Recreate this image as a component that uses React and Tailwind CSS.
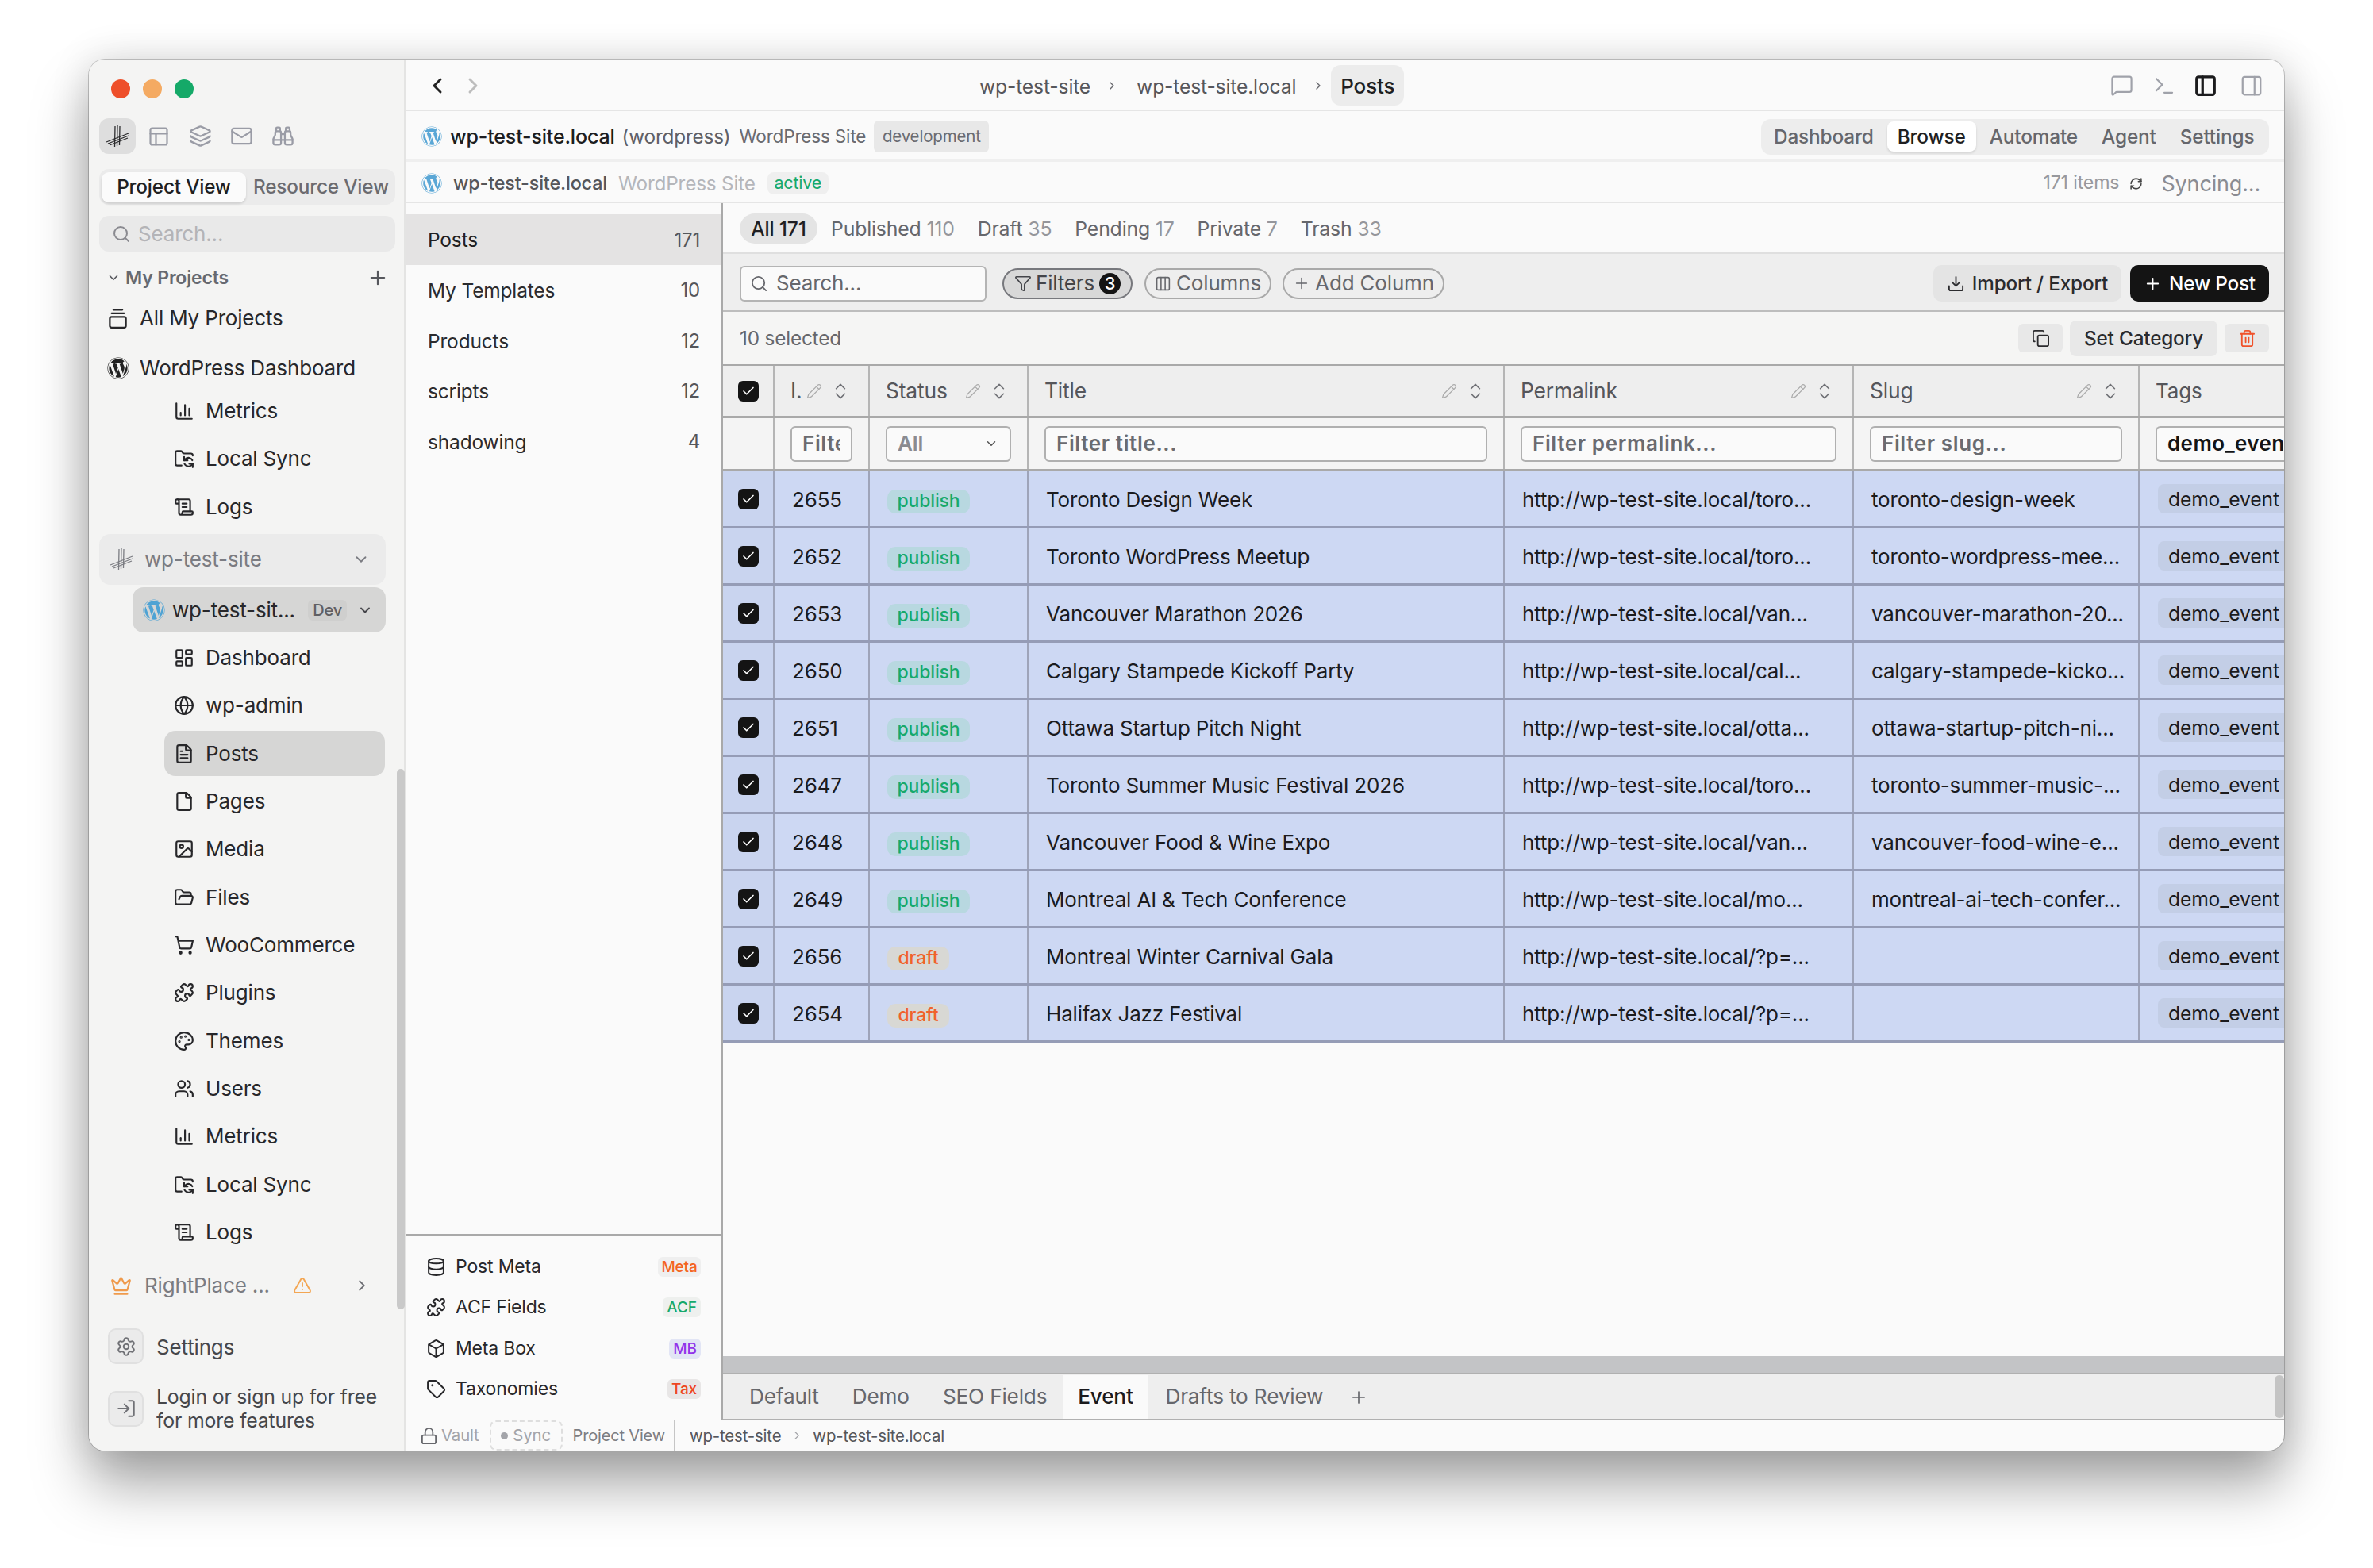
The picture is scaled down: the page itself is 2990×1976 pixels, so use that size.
import {
  Binoculars,
  Box,
  Check,
  ChartColumn,
  ChevronDown,
  ChevronLeft,
  ChevronRight,
  ChevronsUpDown,
  Columns3,
  Copy,
  Crown,
  Database,
  Download,
  File,
  FileText,
  FolderOpen,
  FolderSync,
  Funnel,
  GalleryVerticalEnd,
  Globe,
  Image,
  Layers,
  LayoutDashboard,
  Lock,
  LogIn,
  Mail,
  MessageSquare,
  Palette,
  PanelLeft,
  PanelRight,
  PanelsTopLeft,
  Pencil,
  Plus,
  Puzzle,
  RefreshCw,
  ScrollText,
  Search,
  Settings,
  ShoppingCart,
  Tag,
  Terminal,
  TriangleAlert,
  Trash2,
  Users,
} from "lucide-react";
import { FaWordpress } from "react-icons/fa";

const siteNav = [
  ["Dashboard", LayoutDashboard],
  ["wp-admin", Globe],
  ["Posts", FileText],
  ["Pages", File],
  ["Media", Image],
  ["Files", FolderOpen],
  ["WooCommerce", ShoppingCart],
  ["Plugins", Puzzle],
  ["Themes", Palette],
  ["Users", Users],
  ["Metrics", ChartColumn],
  ["Local Sync", FolderSync],
  ["Logs", ScrollText],
];

const rows = [
  ["2655", "publish", "Toronto Design Week", "http://wp-test-site.local/toro...", "toronto-design-week"],
  ["2652", "publish", "Toronto WordPress Meetup", "http://wp-test-site.local/toro...", "toronto-wordpress-mee..."],
  ["2653", "publish", "Vancouver Marathon 2026", "http://wp-test-site.local/van...", "vancouver-marathon-20..."],
  ["2650", "publish", "Calgary Stampede Kickoff Party", "http://wp-test-site.local/cal...", "calgary-stampede-kicko..."],
  ["2651", "publish", "Ottawa Startup Pitch Night", "http://wp-test-site.local/otta...", "ottawa-startup-pitch-ni..."],
  ["2647", "publish", "Toronto Summer Music Festival 2026", "http://wp-test-site.local/toro...", "toronto-summer-music-..."],
  ["2648", "publish", "Vancouver Food & Wine Expo", "http://wp-test-site.local/van...", "vancouver-food-wine-e..."],
  ["2649", "publish", "Montreal AI & Tech Conference", "http://wp-test-site.local/mo...", "montreal-ai-tech-confer..."],
  ["2656", "draft", "Montreal Winter Carnival Gala", "http://wp-test-site.local/?p=...", ""],
  ["2654", "draft", "Halifax Jazz Festival", "http://wp-test-site.local/?p=...", ""],
];

function HashLogo({ className }) {
  return (
    <svg viewBox="0 0 32 32" className={className} fill="none" stroke="currentColor" strokeWidth="1.3">
      <path d="M13 3 12.5 29M16 2 15.5 28M19 3 18.5 27" />
      <path d="M2 23 30 12M4 25 30 15M6 27 29 18" />
    </svg>
  );
}

function Checkbox() {
  return (
    <span className="flex h-[26px] w-[26px] items-center justify-center rounded-[6px] bg-[#141414]">
      <Check size={18} strokeWidth={2.2} className="text-white" />
    </span>
  );
}

function SubRow({ label, Icon, active }) {
  return (
    <div className="flex h-[60.33px] items-center pl-[95px] pr-[24px]">
      <div
        className={
          active
            ? "flex h-[57px] w-full items-center rounded-[14px] bg-[#d6d6d5] pl-[12px] text-[#27272a]"
            : "flex h-[57px] w-full items-center pl-[12px] text-[#27272a]"
        }
      >
        <Icon size={26} strokeWidth={2} className="shrink-0" />
        <span className="ml-[14px] text-[26px] leading-none">{label}</span>
      </div>
    </div>
  );
}

function Sidebar() {
  return (
    <aside className="relative flex w-[399px] shrink-0 flex-col border-r-2 border-[#e4e4e3] bg-[#f4f4f3]">
      {/* traffic lights */}
      <div className="flex gap-[16px] pl-[28px] pt-[25px]">
        <span className="h-[24px] w-[24px] rounded-full bg-[#ee4f2a]" />
        <span className="h-[24px] w-[24px] rounded-full bg-[#f4aa62]" />
        <span className="h-[24px] w-[24px] rounded-full bg-[#15a968]" />
      </div>

      {/* app switcher */}
      <div className="mt-[25px] flex gap-[6px] px-[13px] text-[#9a9ca6]">
        <span className="flex h-[45px] w-[46px] items-center justify-center rounded-[12px] bg-[#dedede] text-[#2c2c2e]">
          <HashLogo className="h-[32px] w-[32px]" />
        </span>
        <span className="flex h-[45px] w-[46px] items-center justify-center"><PanelsTopLeft size={28} strokeWidth={1.9} /></span>
        <span className="flex h-[45px] w-[46px] items-center justify-center"><Layers size={29} strokeWidth={1.9} /></span>
        <span className="flex h-[45px] w-[46px] items-center justify-center"><Mail size={29} strokeWidth={1.9} /></span>
        <span className="flex h-[45px] w-[46px] items-center justify-center"><Binoculars size={29} strokeWidth={1.9} /></span>
      </div>

      <div className="mx-[13px] mt-[19px] flex h-[45px] w-[373px] items-center rounded-[12px] bg-[#ebebeb] p-[3px]">
        <span className="flex h-[38px] w-[182px] items-center justify-center rounded-[9px] bg-[#fbfbfb] text-[24.3px] font-medium leading-none text-[#1f1f22] shadow-[0_2px_3px_rgba(0,0,0,0.12)]">
          Project View
        </span>
        <span className="ml-[9px] whitespace-nowrap text-[24.3px] font-medium leading-none text-[#6b6b70]">Resource View</span>
      </div>

      <div className="mx-[13px] mt-[14px] flex h-[45px] w-[373px] items-center rounded-[12px] bg-[#e9e9e9] pl-[16px]">
        <Search size={24} strokeWidth={2} className="text-[#8a8a90]" />
        <span className="ml-[9px] text-[26px] leading-none text-[#b4b4b7]">Search...</span>
      </div>

      <div className="mt-[15px] flex h-[36px] items-center pl-[22px] pr-[19px] text-[#666970]">
        <ChevronDown size={18} strokeWidth={2.2} className="text-[#55575c]" />
        <span className="ml-[6px] text-[23px] font-semibold leading-none">My Projects</span>
        <Plus size={28} strokeWidth={1.9} className="ml-auto text-[#55575c]" />
      </div>

      <div className="mt-[6px] flex h-[54px] items-center pl-[23px] text-[#27272a]">
        <GalleryVerticalEnd size={27} strokeWidth={2} />
        <span className="ml-[14px] text-[26px] leading-none">All My Projects</span>
      </div>

      <div className="mt-[10px] flex h-[52px] items-center pl-[23px] text-[#27272a]">
        <FaWordpress size={28} className="text-[#222]" />
        <span className="ml-[13px] text-[26px] leading-none">WordPress Dashboard</span>
      </div>

      <div className="-mt-[2px]">
        <SubRow label="Metrics" Icon={ChartColumn} />
        <SubRow label="Local Sync" Icon={FolderSync} />
        <SubRow label="Logs" Icon={ScrollText} />
      </div>

      <div className="mx-[13px] mt-[4px] flex h-[64px] w-[361px] items-center rounded-[14px] bg-[#ebebeb] pl-[12px] pr-[20px] pt-[1px] text-[#7b7c82]">
        <HashLogo className="h-[32px] w-[32px]" />
        <span className="ml-[13px] text-[26px] leading-none">wp-test-site</span>
        <ChevronDown size={22} strokeWidth={2} className="ml-auto" />
      </div>

      <div className="ml-[55px] mt-[3px] flex h-[57px] w-[319px] items-center rounded-[14px] bg-[#d6d6d5] pl-[13px] pr-[16px] pt-[1px] text-[#27272a]">
        <FaWordpress size={28} className="text-[#4fa3d4]" />
        <span className="ml-[9px] text-[26px] leading-none">wp-test-sit...</span>
        <span className="ml-auto rounded-[6px] bg-[#cfcfce] px-[6px] py-[3px] text-[20px] font-medium leading-none text-[#5f5f63]">Dev</span>
        <ChevronDown size={20} strokeWidth={2.2} className="ml-[13px] text-[#45454a]" />
      </div>

      <div className="mt-[2px]">
        {siteNav.map(([label, Icon]) => (
          <SubRow key={label} label={label} Icon={Icon} active={label === "Posts"} />
        ))}
      </div>

      <div className="mt-[12px] flex h-[50px] items-center pl-[27px] text-[#7b7c82]">
        <Crown size={27} strokeWidth={2} className="text-[#ef9a4c]" />
        <span className="ml-[16px] text-[26px] leading-none">RightPlace ...</span>
        <TriangleAlert size={24} strokeWidth={1.9} className="ml-[29px] text-[#f3a653]" />
        <ChevronRight size={22} strokeWidth={2} className="ml-[52px] text-[#6e6f74]" />
      </div>

      <div className="mt-[29px] flex items-center pl-[24px] text-[#46474b]">
        <span className="flex h-[45px] w-[45px] items-center justify-center rounded-[10px] border-2 border-[#e0e0e0] bg-[#ebebeb]">
          <Settings size={26} strokeWidth={1.8} className="text-[#707176]" />
        </span>
        <span className="ml-[16px] pt-[2px] text-[26px] leading-none">Settings</span>
      </div>

      <div className="mt-[26px] flex items-center pl-[24px] text-[#46474b]">
        <span className="flex h-[45px] w-[45px] items-center justify-center rounded-[10px] border-2 border-[#e0e0e0] bg-[#ebebeb]">
          <LogIn size={26} strokeWidth={1.8} className="text-[#707176]" />
        </span>
        <span className="ml-[16px] text-[24.8px] leading-[30px]">
          Login or sign up for free
          <br />
          for more features
        </span>
      </div>

      {/* scrollbar */}
      <span className="absolute left-[388px] top-[894px] h-[681px] w-[10px] rounded-full bg-[#c9c9c9]" />
    </aside>
  );
}

function TopBars() {
  return (
    <>
      <div className="flex h-[65px] shrink-0 items-center border-b-2 border-[#e5e5e5] pl-[24px] pr-[26px] pt-[2px]">
        <ChevronLeft size={32} strokeWidth={2.2} className="text-[#222]" />
        <ChevronRight size={32} strokeWidth={2.2} className="ml-[13px] text-[#bdbdbd]" />
        <span className="ml-[622px] pt-[3px] text-[24.7px] leading-none text-[#56575c]">wp-test-site</span>
        <ChevronRight size={16} strokeWidth={2} className="ml-[19px] text-[#66676c]" />
        <span className="ml-[23px] pt-[3px] text-[24.7px] leading-none text-[#56575c]">wp-test-site.local</span>
        <ChevronRight size={16} strokeWidth={2} className="ml-[20px] text-[#66676c]" />
        <span className="ml-[8px] flex h-[51px] w-[92px] items-center justify-center rounded-[12px] bg-[#ececec] pt-[3px] text-[26px] font-medium leading-none text-[#1f1f22]">
          Posts
        </span>
        <MessageSquare size={29} strokeWidth={1.8} className="ml-auto text-[#a0a2aa]" />
        <Terminal size={30} strokeWidth={1.8} className="ml-[24px] text-[#a0a2aa]" />
        <PanelLeft size={30} strokeWidth={2.6} className="ml-[22px] text-[#1b1b1d]" />
        <PanelRight size={30} strokeWidth={1.8} className="ml-[28px] text-[#a0a2aa]" />
      </div>

      <div className="flex h-[64px] shrink-0 items-center border-b-[3px] border-[#efefef] pl-[20px] pr-[19px] pt-[3px]">
        <FaWordpress size={26} className="text-[#5aa7d6]" />
        <span className="ml-[10px] text-[25px] font-medium leading-none text-[#1d1d20]">wp-test-site.local</span>
        <span className="ml-[9px] text-[24.3px] leading-none text-[#5f6066]">(wordpress)</span>
        <span className="ml-[11px] text-[22.5px] leading-none text-[#6a6b70]">WordPress Site</span>
        <span className="ml-[10px] flex h-[40px] w-[145px] items-center justify-center rounded-[6px] bg-[#e8e8e8] text-[20.5px] leading-none text-[#6a6b70]">
          development
        </span>
        <div className="ml-auto flex h-[45px] w-[640px] items-center rounded-[12px] bg-[#ededed] pl-[16px] text-[24.4px] font-medium leading-none text-[#66676c]">
          <span>Dashboard</span>
          <span className="ml-[17px] flex h-[38px] w-[112px] items-center justify-center rounded-[8px] bg-white text-[#1f1f22] shadow-[0_2px_3px_rgba(0,0,0,0.12)]">
            Browse
          </span>
          <span className="ml-[17px]">Automate</span>
          <span className="ml-[30px]">Agent</span>
          <span className="ml-[30px]">Settings</span>
        </div>
      </div>

      <div className="flex h-[52px] shrink-0 items-center border-b-2 border-[#e5e5e5] pl-[20px] pr-[30px] pt-[4px]">
        <FaWordpress size={26} className="text-[#5aa7d6]" />
        <span className="ml-[14px] text-[23.4px] font-medium leading-none text-[#55565b]">wp-test-site.local</span>
        <span className="ml-[14px] text-[24.3px] leading-none text-[#b5b6ba]">WordPress Site</span>
        <span className="ml-[15px] flex h-[28px] w-[77px] items-center justify-center rounded-[8px] bg-[#efefef] text-[21.5px] leading-none text-[#16a96c]">
          active
        </span>
        <span className="ml-auto text-[23.2px] leading-none text-[#97989d]">171 items</span>
        <RefreshCw size={17} strokeWidth={2.2} className="ml-[13px] text-[#444]" />
        <span className="ml-[23px] text-[27px] leading-none text-[#8b8c92]">Syncing...</span>
      </div>
    </>
  );
}

function ListPanel() {
  const lists = [
    ["Posts", 171],
    ["My Templates", 10],
    ["Products", 12],
    ["scripts", 12],
    ["shadowing", 4],
  ];
  const extras = [
    ["Post Meta", Database, "Meta", "w-[54px] bg-[#efefef] text-[#f4641f]"],
    ["ACF Fields", Puzzle, "ACF", "w-[48px] bg-[#eef0ee] text-[#16a96c]"],
    ["Meta Box", Box, "MB", "w-[40px] bg-[#e2e5f5] text-[#9333ea]"],
    ["Taxonomies", Tag, "Tax", "w-[42px] bg-[#e8e6e6] text-[#ee4622]"],
  ];
  return (
    <div className="flex w-[400px] shrink-0 flex-col border-r-2 border-[#a9a9a9]">
      <div className="flex-1 pt-[14px]">
        {lists.map(([name, count], i) => (
          <div
            key={name}
            className={
              i === 0
                ? "flex h-[64px] items-center justify-between bg-[#e4e3e3] pl-[28px] pr-[27px] pt-[1px] text-[#1f1f22]"
                : "flex h-[63.6px] items-center justify-between pl-[28px] pr-[27px] pt-[1px] text-[#2b2b2e]"
            }
          >
            <span className="text-[24.5px] leading-none">{name}</span>
            <span className="text-[24px] leading-none text-[#55565b]">{count}</span>
          </div>
        ))}
      </div>
      <div className="h-[235px] border-t-2 border-[#a9a9a9] pt-[14px]">
        {extras.map(([name, Icon, badge, tone]) => (
          <div key={name} className="flex h-[51.3px] items-center pl-[26px] pr-[26px] text-[#27272a]">
            <Icon size={25} strokeWidth={1.9} />
            <span className="ml-[12px] text-[23px] leading-none">{name}</span>
            <span className={`ml-auto flex h-[25px] items-center justify-center rounded-[6px] text-[19px] font-medium leading-none ${tone}`}>
              {badge}
            </span>
          </div>
        ))}
      </div>
    </div>
  );
}

function Toolbar() {
  const tabs = [
    ["Published", "110"],
    ["Draft", "35"],
    ["Pending", "17"],
    ["Private", "7"],
    ["Trash", "33"],
  ];
  return (
    <>
      <div className="flex h-[64px] shrink-0 items-center border-b-[3px] border-[#dfdfdf] pl-[21px] pt-[3px] text-[24.8px] leading-none">
        <span className="flex h-[38px] w-[98px] items-center justify-center rounded-full bg-[#e4e4e4] text-[24.5px] font-medium text-[#1f1f22]">All 171</span>
        <div className="ml-[17px] flex gap-[29px]">
          {tabs.map(([name, n]) => (
            <span key={name} className="text-[#66676c]">
              {name} <span className="text-[#95969b]">{n}</span>
            </span>
          ))}
        </div>
      </div>

      <div className="flex h-[73px] shrink-0 items-center border-b-2 border-[#bdbdbd] bg-[#eeeeee] pl-[21px] pr-[19px] pt-[3px]">
        <div className="flex h-[45px] w-[311px] items-center rounded-[6px] border-2 border-[#b4b4b4] bg-[#fafafa] pl-[11px]">
          <Search size={23} strokeWidth={1.9} className="text-[#66676c]" />
          <span className="ml-[10px] text-[26px] leading-none text-[#66676c]">Search...</span>
        </div>
        <button className="ml-[20px] flex h-[39px] w-[164px] items-center justify-center rounded-full border-2 border-[#77787d] bg-[#d8d8d8] text-[26px] leading-none text-[#44454a]">
          <Funnel size={22} strokeWidth={1.8} />
          <span className="ml-[5px]">Filters</span>
          <span className="ml-[6px] flex h-[27px] w-[27px] items-center justify-center rounded-full bg-[#141414] text-[22px] font-medium text-white">3</span>
        </button>
        <button className="ml-[15px] flex h-[39px] w-[160px] items-center justify-center rounded-full border-2 border-[#a9a9a9] text-[26px] leading-none text-[#66676c]">
          <Columns3 size={21} strokeWidth={1.8} />
          <span className="ml-[6px]">Columns</span>
        </button>
        <button className="ml-[14px] flex h-[39px] w-[204px] items-center justify-center rounded-full border-2 border-[#a9a9a9] text-[26px] leading-none text-[#66676c]">
          <Plus size={22} strokeWidth={1.6} />
          <span className="ml-[6px]">Add Column</span>
        </button>
        <button className="ml-auto flex h-[46px] w-[237px] items-center justify-center rounded-[10px] bg-[#e4e4e4] text-[24.3px] font-medium leading-none text-[#2b2b2e]">
          <Download size={23} strokeWidth={1.9} />
          <span className="ml-[9px]">Import / Export</span>
        </button>
        <button className="ml-[11px] flex h-[46px] w-[175px] items-center justify-center rounded-[10px] bg-[#141414] text-[24.3px] font-medium leading-none text-white">
          <Plus size={23} strokeWidth={1.9} />
          <span className="ml-[9px]">New Post</span>
        </button>
      </div>

      <div className="flex h-[66px] shrink-0 items-center bg-[#f5f5f4] pl-[21px] pr-[19px]">
        <span className="text-[24.3px] leading-none text-[#66676c]">10 selected</span>
        <span className="ml-auto flex h-[36px] w-[56px] items-center justify-center rounded-[6px] bg-[#e8e8e8] text-[#2b2b2e]">
          <Copy size={23} strokeWidth={1.9} />
        </span>
        <span className="ml-[9px] flex h-[45px] w-[186px] items-center justify-center rounded-[8px] bg-[#e8e8e8] text-[24.3px] font-medium leading-none text-[#2b2b2e]">
          Set Category
        </span>
        <span className="ml-[9px] flex h-[36px] w-[56px] items-center justify-center rounded-[6px] bg-[#e8e8e8] text-[#f0522a]">
          <Trash2 size={23} strokeWidth={1.9} />
        </span>
      </div>
    </>
  );
}

function HeadCell({ width, label }) {
  return (
    <div className={`flex h-full shrink-0 items-center border-r-2 border-[#b5b5b5] pl-[20px] ${width}`}>
      <span className="text-[26.4px] leading-none text-[#55565b]">{label}</span>
      <Pencil size={20} strokeWidth={1.5} className="ml-auto text-[#ababab]" />
      <ChevronsUpDown size={26} strokeWidth={1.5} className="ml-[10px] mr-[22px] text-[#707176]" />
    </div>
  );
}

function FilterInput({ width, value }) {
  return (
    <div className={`flex h-full shrink-0 items-center border-r-2 border-[#b5b5b5] px-[20px] ${width}`}>
      <div className="flex h-[45px] w-full items-center rounded-[6px] border-2 border-[#b0b0b0] bg-[#fafafa] px-[13px] text-[26px] font-semibold leading-none tracking-[0.63px] text-[#6a6b70]">
        <span className="block overflow-hidden whitespace-nowrap leading-[32px]">{value}</span>
      </div>
    </div>
  );
}

function DataTable() {
  return (
    <div className="flex flex-col overflow-hidden border-b-[3px] border-[#959cb6]">
      <div className="flex h-[65px] shrink-0 items-center border-t-2 border-[#a9a9a9] bg-[#eeeeee]">
        <div className="flex h-full w-[65px] shrink-0 items-center justify-center border-r-2 border-[#b5b5b5]">
          <Checkbox />
        </div>
        <HeadCell width="w-[120px]" label="I." />
        <HeadCell width="w-[200px]" label="Status" />
        <HeadCell width="w-[600px]" label="Title" />
        <HeadCell width="w-[440px]" label="Permalink" />
        <HeadCell width="w-[360px]" label="Slug" />
        <div className="flex h-full flex-1 items-center pl-[20px]">
          <span className="text-[26px] leading-none text-[#55565b]">Tags</span>
        </div>
      </div>

      <div className="flex h-[67px] shrink-0 items-center border-t-[3px] border-[#a9a9a9] bg-[#f4f4f4]">
        <div className="h-full w-[65px] shrink-0 border-r-2 border-[#b5b5b5]" />
        <FilterInput width="w-[120px]" value="Filter" />
        <div className="flex h-full w-[200px] shrink-0 items-center border-r-2 border-[#b5b5b5] px-[20px]">
          <div className="flex h-[45px] w-full items-center justify-between rounded-[6px] border-2 border-[#b0b0b0] bg-[#fafafa] pl-[13px] pr-[14px] text-[26px] font-semibold leading-none text-[#8a8b90]">
            All
            <ChevronDown size={18} strokeWidth={2} className="text-[#555]" />
          </div>
        </div>
        <FilterInput width="w-[600px]" value="Filter title..." />
        <FilterInput width="w-[440px]" value="Filter permalink..." />
        <FilterInput width="w-[360px]" value="Filter slug..." />
        <div className="flex h-full min-w-0 flex-1 items-center pl-[20px]">
          <div className="flex h-[45px] w-full items-center overflow-hidden whitespace-nowrap rounded-l-[6px] border-y-2 border-l-2 border-[#b0b0b0] bg-[#fafafa] pl-[13px] text-[26px] font-semibold leading-none tracking-[0.4px] text-[#141416]">
            demo_event
          </div>
        </div>
      </div>

      {rows.map(([id, status, title, link, slug], i) => (
        <div
          key={id}
          className={
            i === 0
              ? "flex h-[72px] shrink-0 items-center border-t-[3px] border-[#a9a9a9] bg-[#cdd8f3] text-[26px] leading-none text-[#1b1b1e]"
              : "flex h-[72px] shrink-0 items-center border-t-[3px] border-[#959cb6] bg-[#cdd8f3] text-[26px] leading-none text-[#1b1b1e]"
          }
        >
          <div className="flex h-full w-[65px] shrink-0 items-center justify-center border-r-2 border-[#9ea4b9] bg-[#c9d4ef]">
            <Checkbox />
          </div>
          <div className="flex h-full w-[120px] shrink-0 items-center border-r-2 border-[#9ea4b9] pl-[22px] pt-[3px]">{id}</div>
          <div className="flex h-full w-[200px] shrink-0 items-center border-r-2 border-[#9ea4b9] pl-[22px] pt-[6px]">
            <span
              className={
                status === "publish"
                  ? "flex h-[30px] w-[104px] items-center justify-center rounded-[10px] bg-[#b8d8e0] text-[23px] font-medium leading-none text-[#16a96c]"
                  : "flex h-[30px] w-[78px] items-center justify-center rounded-[10px] bg-[#d8d8d4] text-[23px] font-medium leading-none text-[#f0622a]"
              }
            >
              {status}
            </span>
          </div>
          <div className="flex h-full w-[600px] shrink-0 items-center border-r-2 border-[#9ea4b9] pl-[22px] pt-[3px]">{title}</div>
          <div className="flex h-full w-[440px] shrink-0 items-center whitespace-nowrap border-r-2 border-[#9ea4b9] pl-[22px] pt-[3px]">{link}</div>
          <div className="flex h-full w-[360px] shrink-0 items-center whitespace-nowrap border-r-2 border-[#9ea4b9] pl-[22px] pt-[3px]">{slug}</div>
          <div className="flex h-full min-w-0 flex-1 items-center pl-[23px]">
            <span className="flex h-[37px] flex-1 items-center overflow-hidden whitespace-nowrap rounded-l-[8px] bg-[#c3cee6] pl-[13px] pt-[2px] text-[24.7px]">demo_event</span>
          </div>
        </div>
      ))}
    </div>
  );
}

function ViewTabs() {
  return (
    <>
      <div className="h-[21px] shrink-0 bg-[#c3c4c6]" />
      <div className="relative flex h-[60px] shrink-0 items-stretch border-y-2 border-[#b0b0b0] bg-[#eeeeee] pl-[33px] pt-[1px] text-[26.2px] leading-none text-[#66676c]">
        <span className="flex items-center">Default</span>
        <span className="ml-[42px] flex items-center">Demo</span>
        <span className="ml-[42px] flex items-center">SEO Fields</span>
        <span className="ml-[20px] flex w-[107px] items-center justify-center bg-[#fafafa] font-medium text-[#1b1b1e]">Event</span>
        <span className="ml-[22px] flex items-center">Drafts to Review</span>
        <span className="ml-[33px] flex items-center"><Plus size={24} strokeWidth={1.7} /></span>
        <span className="absolute right-0 top-[1px] h-[54px] w-[12px] rounded-full bg-[#c4c4c4]" />
      </div>
    </>
  );
}

function StatusBar() {
  return (
    <div className="flex h-[38px] shrink-0 items-center text-[20.4px] leading-none">
      <div className="flex h-full w-[340px] shrink-0 items-center border-r-2 border-[#c5c5c5] pl-[18px]">
        <Lock size={23} strokeWidth={1.9} className="text-[#66676c]" />
        <span className="ml-[4px] text-[#a3a4a9]">Vault</span>
        <span className="ml-[13px] flex h-full w-[92px] items-center justify-center gap-[6px] rounded-[8px] border-2 border-dashed border-[#dedede] text-[#a3a4a9]">
          <span className="h-[9px] w-[9px] rounded-full bg-[#a3a4a9]" />
          Sync
        </span>
        <span className="ml-[13px] whitespace-nowrap text-[20px] text-[#7c7d82]">Project View</span>
      </div>
      <span className="ml-[18px] pt-[2px] text-[#55565b]">wp-test-site</span>
      <ChevronRight size={18} strokeWidth={1.5} className="ml-[11px] text-[#a3a4a9]" />
      <span className="ml-[11px] pt-[2px] text-[#55565b]">wp-test-site.local</span>
    </div>
  );
}

export default function App() {
  return (
    <div className="h-[1976px] overflow-hidden bg-white pl-[112px] pt-[75px] font-[Inter,sans-serif] tracking-[-0.17px]">
      <div className="flex h-[1753px] w-[2766px] overflow-hidden rounded-[20px] bg-[#fafafa] shadow-[0_0_0_1px_rgba(0,0,0,0.2),0_44px_70px_rgba(0,0,0,0.34),0_0_50px_rgba(0,0,0,0.14)]">
        <Sidebar />
        <main className="flex min-w-0 flex-1 flex-col">
          <TopBars />
          <div className="flex min-h-0 flex-1">
            <ListPanel />
            <div className="flex min-w-0 flex-1 flex-col">
              <Toolbar />
              <DataTable />
              <div className="flex-1" />
              <ViewTabs />
            </div>
          </div>
          <StatusBar />
        </main>
      </div>
    </div>
  );
}
